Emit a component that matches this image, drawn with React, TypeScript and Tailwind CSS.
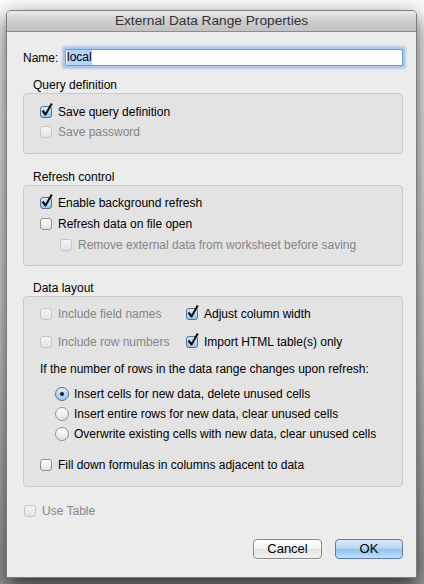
import clsx from "clsx";

const font = { fontFamily: '"Liberation Sans", Arial, sans-serif' };

function Check({ checked = false, disabled = false }: { checked?: boolean; disabled?: boolean }) {
  return (
    <span
      className={clsx(
        "relative inline-block h-[12px] w-[12px] shrink-0 rounded-[3px] border",
        disabled
          ? "border-[#c6c6c6] bg-[linear-gradient(#f4f4f4,#e4e4e4)]"
          : checked
            ? "border-[#4f6f9c] bg-[linear-gradient(#dcebfa,#9fc4ec)]"
            : "border-[#8f8f8f] bg-[linear-gradient(#ffffff,#e2e2e2)] shadow-[inset_0_1px_0_#fff]"
      )}
    >
      {checked && (
        <svg className="absolute -right-[3px] -top-[5px]" width="14" height="15" viewBox="0 0 14 15">
          <path d="M2.5 8.5 L5.5 12.5 L11.8 1.5" fill="none" stroke="#111" strokeWidth="2.1" strokeLinejoin="round" />
        </svg>
      )}
    </span>
  );
}

function Radio({ selected = false }: { selected?: boolean }) {
  return (
    <span
      className={clsx(
        "relative flex h-[14px] w-[14px] shrink-0 items-center justify-center rounded-full border",
        selected
          ? "border-[#4f6f9c] bg-[linear-gradient(#dceafa,#9ec4ec)]"
          : "border-[#8f8f8f] bg-[linear-gradient(#ffffff,#e0e0e0)]"
      )}
    >
      {selected && <span className="h-[4px] w-[4px] rounded-full bg-[#1a1a1a]" />}
    </span>
  );
}

function CheckRow({
  label,
  checked,
  disabled,
  className,
}: {
  label: string;
  checked?: boolean;
  disabled?: boolean;
  className?: string;
}) {
  return (
    <div className={clsx("flex items-center gap-[6px]", className)}>
      <Check checked={checked} disabled={disabled} />
      <span className={disabled ? "text-[#858585]" : "text-black"}>{label}</span>
    </div>
  );
}

function RadioRow({ label, selected }: { label: string; selected?: boolean }) {
  return (
    <div className="flex h-[20px] items-center gap-[5px] pl-[15px]">
      <Radio selected={selected} />
      <span>{label}</span>
    </div>
  );
}

function GroupLabel({ children, className }: { children: string; className?: string }) {
  return <div className={clsx("h-[15px] pl-[10px] leading-[15px] text-black", className)}>{children}</div>;
}

export default function App() {
  return (
    <div
      className="h-[584px] w-[424px] overflow-hidden bg-[linear-gradient(#fafafa,#d4d4d4_55%,#9a9a9a)] px-[6px] pt-[10px] text-[12px] text-black"
      style={font}
    >
      <div className="flex w-[411px] flex-col rounded-t-[5px] border border-[#7d7d7d] bg-[#ececec] shadow-[0_8px_20px_rgba(0,0,0,0.7)]">
        <div className="flex h-[21px] items-center justify-center rounded-t-[4px] border-b border-[#8c8c8c] bg-[linear-gradient(#ebebeb,#cdcdcd_50%,#c2c2c2)] text-[13.7px] text-[#333]">
          External Data Range Properties
        </div>

        <div className="flex flex-col pl-[16px] pr-[13px] pt-[15px] pb-[18px]">
          <div className="flex h-[21px] items-center">
            <span className="w-[42px]">Name:</span>
            <div className="flex h-[17px] flex-1 items-center rounded-[1px] border border-[#6e9ad4] bg-white pl-[1px] shadow-[0_0_0_2px_#a9c9ef,0_0_2px_3px_rgba(120,165,225,0.45)]">
              <span className="bg-[#b5d4fb] leading-[15px]">local</span>
            </div>
          </div>

          <GroupLabel className="mt-[10px]">Query definition</GroupLabel>
          <div className="flex flex-col rounded-[4px] border border-[#c9c9c9] bg-[#e3e3e3] pb-[11px] pl-[16px] pt-[8px]">
            <CheckRow className="h-[20px]" label="Save query definition" checked />
            <CheckRow className="h-[20px]" label="Save password" disabled />
          </div>

          <GroupLabel className="mt-[16px]">Refresh control</GroupLabel>
          <div className="flex flex-col rounded-[4px] border border-[#c9c9c9] bg-[#e3e3e3] pb-[10px] pl-[16px] pt-[6px]">
            <CheckRow className="h-[21px]" label="Enable background refresh" checked />
            <CheckRow className="h-[21px]" label="Refresh data on file open" />
            <CheckRow className="h-[21px] pl-[20px]" label="Remove external data from worksheet before saving" disabled />
          </div>

          <GroupLabel className="mt-[15px]">Data layout</GroupLabel>
          <div className="flex flex-col rounded-[4px] border border-[#c9c9c9] bg-[#e3e3e3] pb-[11px] pl-[16px] pt-[7px]">
            <div className="flex h-[20px] items-center">
              <CheckRow className="w-[146px]" label="Include field names" disabled />
              <CheckRow label="Adjust column width" checked />
            </div>
            <div className="mt-[8px] flex h-[20px] items-center">
              <CheckRow className="w-[146px]" label="Include row numbers" disabled />
              <CheckRow label="Import HTML table(s) only" checked />
            </div>
            <div className="mt-[7px] flex h-[20px] items-center">
              If the number of rows in the data range changes upon refresh:
            </div>
            <div className="mt-[5px] flex flex-col">
              <RadioRow label="Insert cells for new data, delete unused cells" selected />
              <RadioRow label="Insert entire rows for new data, clear unused cells" />
              <RadioRow label="Overwrite existing cells with new data, clear unused cells" />
            </div>
            <CheckRow className="mt-[11px] h-[20px]" label="Fill down formulas in columns adjacent to data" />
          </div>

          <CheckRow className="mt-[14px] h-[20px] pl-[1px]" label="Use Table" disabled />

          <div className="mt-[18px] flex justify-end gap-[13px]">
            <button className="h-[20px] w-[69px] rounded-[4px] border border-[#8a8a8a] bg-[linear-gradient(#ffffff,#f3f3f3_50%,#e4e4e4_51%,#f2f2f2)] text-[13px] leading-[18px] text-black shadow-[0_1px_0_rgba(255,255,255,0.6)]">
              Cancel
            </button>
            <button className="h-[20px] w-[68px] rounded-[4px] border border-[#5a7bab] bg-[linear-gradient(#dbeafb,#b3d4f5_50%,#8cc0f0_51%,#c3e2fc)] text-[13px] leading-[18px] text-black">
              OK
            </button>
          </div>
        </div>
      </div>
    </div>
  );
}
